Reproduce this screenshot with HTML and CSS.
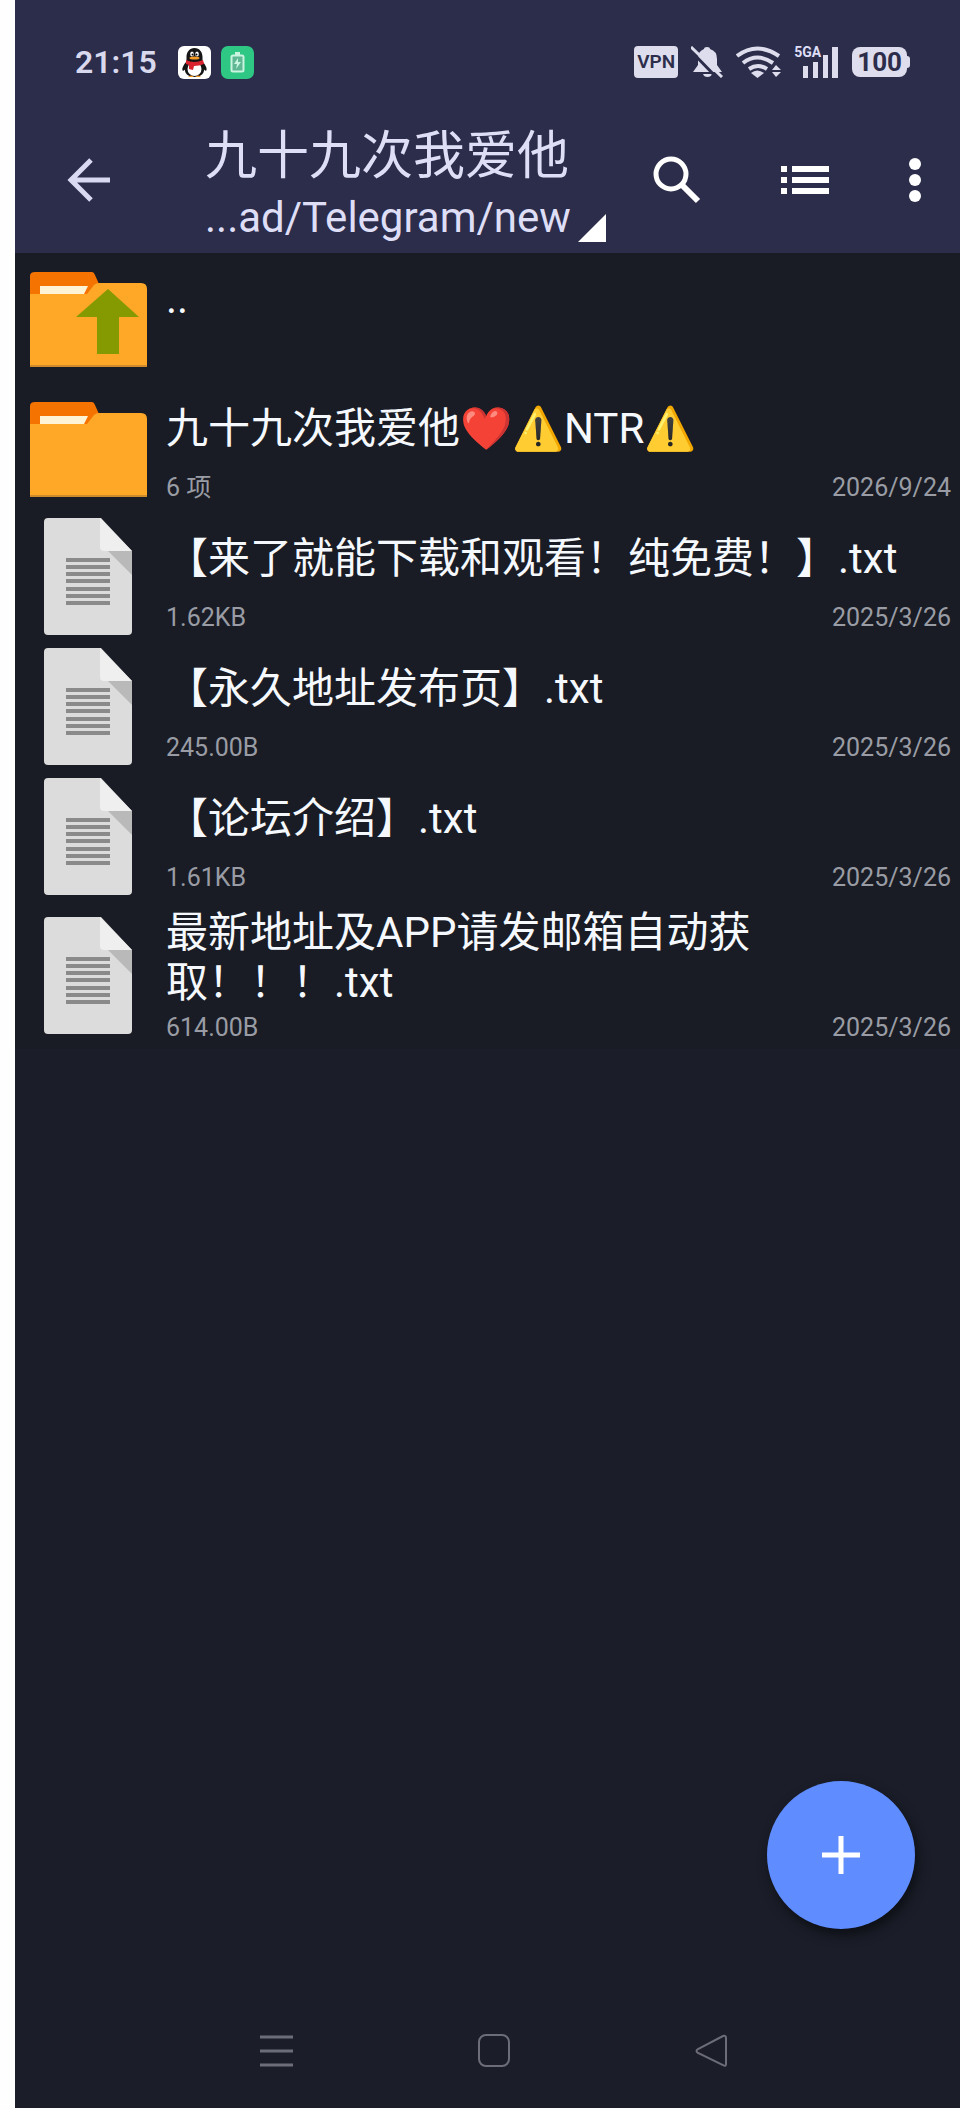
FILE: index.html
```html
<!DOCTYPE html>
<html lang="zh-CN">
<head>
<meta charset="utf-8">
<meta name="viewport" content="width=device-width, initial-scale=1">
<title>九十九次我爱他</title>
<link rel="stylesheet" href="styles.css">
</head>
<body>
<svg class="defs" aria-hidden="true">
  <symbol id="folder" viewBox="0 0 118 96">
    <path d="M1 24V5q0-4 5-4h57q2 0 3 3l4 9v11z" fill="#f57300"/>
    <path d="M1 23h57l7-9q2-2 5-2h42q6 0 6 6v78H1z" fill="#ffa827"/>
    <path d="M11 15h48l-4 8H11z" fill="#fff3d6"/>
    <path d="M1 94h117v2H1z" fill="#cf8a2c"/>
  </symbol>
  <symbol id="file" viewBox="0 0 88 117">
    <path d="M4 0h53l31 33v80q0 4-4 4H4q-4 0-4-4V4q0-4 4-4z" fill="#dcdcdc"/>
    <path d="M56 0l32 33H60q-4 0-4-4z" fill="#efefef"/>
    <path d="M64 33h24v24z" fill="#b9b9b9"/>
    <path d="M22 42h44M22 49h44M22 56h44M22 63h44M22 71h44M22 78h44M22 85h44" stroke="#8a8a8a" stroke-width="4"/>
  </symbol>
</svg>
<div class="app">
  <header class="header">
    <div class="status">
      <time class="clock">21:15</time>
      <svg class="notice" viewBox="0 0 33 33" aria-label="QQ">
        <rect width="33" height="33" rx="6" fill="#fff"/>
        <path d="M9 15C6 18 3 23 5 25l4-3zM24 15c3 3 6 8 4 10l-4-3z" fill="#111"/>
        <path d="M16.500 2c5 0 8 4 8 9v6c4 7 1 14-8 14s-12-7-8-14v-6c0-5 3-9 8-9z" fill="#151515"/>
        <ellipse cx="16.500" cy="23" rx="7" ry="7" fill="#fff"/>
        <ellipse cx="14" cy="8" rx="1.800" ry="2.500" fill="#fff"/><ellipse cx="19" cy="8" rx="1.800" ry="2.500" fill="#fff"/>
        <circle cx="14.500" cy="8.500" r="1"/><circle cx="18.500" cy="8.500" r="1"/>
        <ellipse cx="16.500" cy="12" rx="5" ry="1.500" fill="#f59a23"/>
        <path d="M8 14q8 4 17 0l1 4q-5 2-10 2l-1 4-4-1v-4l-3-1z" fill="#d9232e"/>
        <path d="M10 31q3-3 6 0zM17 31q4-3 6 0z" fill="#f59a23"/>
      </svg>
      <svg class="notice" viewBox="0 0 33 33" aria-label="充电">
        <rect width="33" height="33" rx="7" fill="#2fc784"/>
        <rect x="10.500" y="9.500" width="12" height="16" rx="1.500" fill="#5fb893" stroke="#c9f4df" stroke-width="2"/>
        <path d="M14 6h5v3h-5z" fill="#c9f4df"/><path d="M17 12l-4 6h3l-1 5 5-7h-3z" fill="#c9f4df"/>
      </svg>
      <div class="indicators">
        <span class="vpn">VPN</span>
        <svg class="bell" viewBox="0 0 32 32" aria-label="静音">
          <path d="M13 3q0-2 3-2t3 2q7 2 7 10v6l5 7H2l5-7v-6q0-8 6-10zM12 28h9q-1 3-4.500 3T12 28z" fill="#dddded"/>
          <path d="M-2 3l30 31" stroke="#2c2d4b" stroke-width="3"/><path d="M0 1l31 30" stroke="#dddded" stroke-width="3"/>
        </svg>
        <svg class="wifi" viewBox="0 0 46 32" aria-label="Wi-Fi">
          <g fill="none" stroke="#dddded" stroke-width="4"><path d="M1 10q20-15 42 0M7 17q14-11 30 0M13 23q9-6 18 0"/></g>
          <path d="M15 27q6-5 13 0l-6.500 5z" fill="#dddded"/><path d="M36 24l4-5 5 5zM36 26h9l-5 5z" fill="#dddded"/>
        </svg>
        <span class="signal"><span class="net">5GA</span>
          <svg class="bars" viewBox="0 0 36 32" aria-label="信号"><path d="M0 20h5v12H0zM10 16h5v16h-5zM20 9h5v23h-5zM29 1h6v31h-6z" fill="#dddded"/></svg>
        </span>
        <span class="battery">100</span>
      </div>
    </div>
    <div class="toolbar">
      <button class="icon-button back" aria-label="返回"><svg viewBox="0 0 44 44"><path d="M43 22H4M24 2L4 22l20 20" fill="none" stroke="#d9d9f2" stroke-width="5"/></svg></button>
      <button class="heading">
        <span class="title">九十九次我爱他</span>
        <span class="path">...ad/Telegram/new<svg class="corner" viewBox="0 0 28 28"><path d="M28 0v28H0z" fill="#fff"/></svg></span>
      </button>
      <div class="actions">
        <button class="icon-button" aria-label="搜索"><svg class="search" viewBox="0 0 48 48"><circle cx="18" cy="18" r="15" fill="none" stroke="#fff" stroke-width="5"/><path d="M29 29l16 16" stroke="#fff" stroke-width="6"/></svg></button>
        <button class="icon-button" aria-label="列表"><svg class="list-icon" viewBox="0 0 48 28"><path d="M0 0h6v6H0zM11 0h37v6H11zM0 11h6v6H0zM11 11h37v6H11zM0 22h6v6H0zM11 22h37v6H11z" fill="#fff"/></svg></button>
        <button class="icon-button" aria-label="更多"><svg class="more" viewBox="0 0 12 44"><circle cx="6" cy="6" r="6" fill="#fff"/><circle cx="6" cy="22" r="6" fill="#fff"/><circle cx="6" cy="38" r="6" fill="#fff"/></svg></button>
      </div>
    </div>
  </header>
  <main class="content">
    <ul class="files">
      <li class="row">
        <svg class="folder" viewBox="0 0 118 96"><use href="#folder"/><path d="M79 18l31 28H90v37H68V46H47z" fill="#859900"/></svg>
        <div class="info"><div class="name">..</div><div class="meta"></div></div>
      </li>
      <li class="row">
        <svg class="folder"><use href="#folder"/></svg>
        <div class="info"><div class="name">九十九次我爱他❤️⚠️NTR⚠️</div><div class="meta"><span>6 项</span><time>2026/9/24</time></div></div>
      </li>
      <li class="row">
        <svg class="file"><use href="#file"/></svg>
        <div class="info"><div class="name">【来了就能下载和观看！纯免费！】.txt</div><div class="meta"><span>1.62KB</span><time>2025/3/26</time></div></div>
      </li>
      <li class="row">
        <svg class="file"><use href="#file"/></svg>
        <div class="info"><div class="name">【永久地址发布页】.txt</div><div class="meta"><span>245.00B</span><time>2025/3/26</time></div></div>
      </li>
      <li class="row">
        <svg class="file"><use href="#file"/></svg>
        <div class="info"><div class="name">【论坛介绍】.txt</div><div class="meta"><span>1.61KB</span><time>2025/3/26</time></div></div>
      </li>
      <li class="row row-tall">
        <svg class="file"><use href="#file"/></svg>
        <div class="info"><div class="name">最新地址及APP请发邮箱自动获取！！！.txt</div><div class="meta"><span>614.00B</span><time>2025/3/26</time></div></div>
      </li>
    </ul>
  </main>
  <button class="fab" aria-label="新建"><svg viewBox="0 0 38 38"><path d="M19 0v38M0 19h38" stroke="#fff" stroke-width="5"/></svg></button>
  <nav class="navbar">
    <button class="nav-button" aria-label="最近任务"><svg viewBox="0 0 34 34"><path d="M0 3h33M0 17h33M0 31h33" stroke="#6c6d78" stroke-width="3"/></svg></button>
    <button class="nav-button" aria-label="主页"><svg viewBox="0 0 34 34"><rect x="2" y="1" width="30" height="31" rx="7" fill="none" stroke="#6c6d78" stroke-width="2"/></svg></button>
    <button class="nav-button" aria-label="返回上级"><svg viewBox="0 0 34 34"><path d="M29 2q3-1 3 2v26q0 3-3 1L4 19q-3-2 0-4z" fill="none" stroke="#6c6d78" stroke-width="2"/></svg></button>
  </nav>
</div>
</body>
</html>
```
FILE: styles.css
```css
* { box-sizing: border-box; }
body {
  margin: 0;
  padding: 0 0 2px 15px;
  background: #fdfefd;
  font-family: Roboto, "Noto Sans CJK SC", sans-serif;
  text-spacing-trim: space-all;
}
button {
  padding: 0;
  border: 0;
  background: none;
  color: inherit;
  font: inherit;
}
svg { display: block; flex: none; }
.defs { position: absolute; width: 0; height: 0; }
.app {
  position: relative;
  display: flex;
  flex-direction: column;
  min-height: calc(100vh - 2px);
  background: #1b1e29;
}
.header { background: #2c2d4b; color: #dedef6; }
.status {
  display: flex;
  align-items: center;
  height: 107px;
  padding: 17px 50px 0 60px;
}
.clock { margin-right: 21px; font-size: 32px; font-weight: 600; color: #d9d9ee; }
.notice { width: 33px; height: 33px; margin-right: 10px; }
.indicators { display: flex; align-items: center; gap: 13px; margin-left: auto; }
.vpn {
  padding: 0 3px;
  border-radius: 4px;
  background: #dddded;
  color: #2c2d4b;
  font-size: 19px;
  font-weight: 600;
  line-height: 32px;
}
.bell { width: 32px; height: 32px; }
.wifi { width: 46px; height: 32px; }
.signal { position: relative; padding-left: 8px; }
.net { position: absolute; left: -1px; top: -2px; font-size: 14px; line-height: 16px; font-weight: 700; }
.bars { width: 36px; height: 32px; }
.battery {
  position: relative;
  margin-right: 3px;
  padding: 0 5px;
  border-radius: 8px;
  background: #dddded;
  color: #2c2d4b;
  font-size: 26px;
  font-weight: 700;
  line-height: 30px;
}
.battery::after {
  content: "";
  position: absolute;
  left: 100%;
  top: 9px;
  width: 3px;
  height: 12px;
  border-radius: 0 3px 3px 0;
  background: #dddded;
}
.toolbar { display: flex; align-items: center; height: 146px; padding: 0 39px 0 52px; }
.icon-button { display: flex; align-items: center; justify-content: center; min-height: 48px; }
.back svg { width: 44px; height: 44px; }
.heading { display: flex; flex-direction: column; margin-left: 94px; padding-top: 10px; text-align: left; }
.title { font-size: 52px; line-height: 66px; white-space: nowrap; }
.path { display: flex; align-items: flex-end; gap: 7px; font-size: 42px; line-height: 56px; white-space: nowrap; }
.corner { width: 28px; height: 28px; margin-bottom: 4px; }
.actions { display: flex; align-items: center; gap: 80px; margin-left: auto; }
.search { width: 48px; height: 48px; }
.list-icon { width: 48px; height: 28px; }
.more { width: 12px; height: 44px; }
.content { flex: 1; }
.files { margin: 0; padding: 0; list-style: none; background: #191c24; }
.row { display: flex; align-items: center; padding: 5px 9px 8px 14px; }
.row-tall { padding-top: 2px; padding-bottom: 4px; }
.folder { width: 118px; height: 96px; margin: 4px 19px 0 0; }
.file { width: 88px; height: 117px; margin: 0 34px 0 15px; }
.info { flex: 1; min-width: 0; }
.name {
  display: flow-root;
  min-height: 82px;
  padding: 15px 0;
  color: #f5f8fc;
  font-size: 42px;
  line-height: 50px;
}
.row-tall .name { padding: 3px 0; }
.row:first-child { min-height: 130px; }
.row:nth-child(2) { min-height: 130px; }
.meta {
  display: flex;
  justify-content: space-between;
  min-height: 34px;
  color: #9a9ca5;
  font-size: 25px;
  line-height: 34px;
}
.fab {
  position: absolute;
  right: 45px;
  bottom: 179px;
  display: flex;
  align-items: center;
  justify-content: center;
  width: 148px;
  height: 148px;
  border-radius: 50%;
  background: #5f8cff;
  box-shadow: 3px 6px 12px #0d0f15;
}
.fab svg { width: 38px; height: 38px; }
.navbar { display: flex; justify-content: space-between; padding: 40px 232px 40px 245px; }
.nav-button { display: flex; align-items: center; justify-content: center; }
.nav-button svg { width: 34px; height: 34px; }
```
